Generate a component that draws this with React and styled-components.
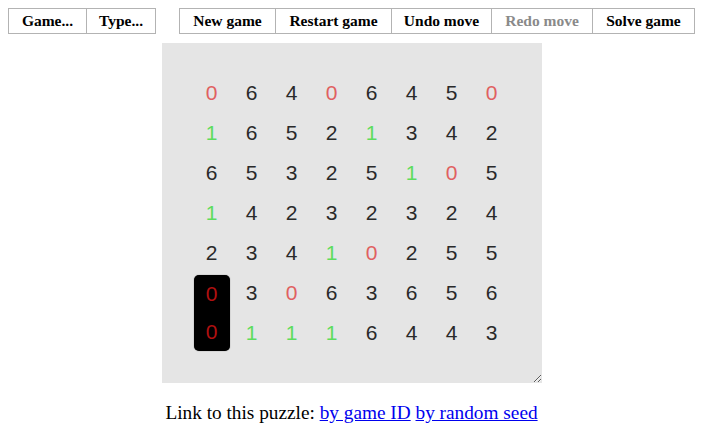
import React from 'react';
import styled, { createGlobalStyle } from 'styled-components';

const GlobalStyle = createGlobalStyle`
    body {
        margin: 8px;
        background: #ffffff;
        font-family: "Liberation Serif", "Times New Roman", serif;
    }
`;

const grid = [
    [0, 6, 4, 0, 6, 4, 5, 0],
    [1, 6, 5, 2, 1, 3, 4, 2],
    [6, 5, 3, 2, 5, 1, 0, 5],
    [1, 4, 2, 3, 2, 3, 2, 4],
    [2, 3, 4, 1, 0, 2, 5, 5],
    [0, 3, 0, 6, 3, 6, 5, 6],
    [0, 1, 1, 1, 6, 4, 4, 3],
];

const tone = (n) => (n === 0 ? 'red' : n === 1 ? 'green' : 'plain');

const Page = styled.div`
    display: flex;
    flex-direction: column;
    align-items: center;
`;

const Toolbar = styled.div`
    align-self: stretch;
    display: flex;
    justify-content: space-between;
`;

const ButtonGroup = styled.div`
    display: flex;
    border: 1px solid #b3b3b3;
    height: 24px;
`;

const ToolButton = styled.button`
    width: ${(p) => p.w}px;
    height: 24px;
    padding: 0;
    border: none;
    border-left: ${(p) => (p.first ? 'none' : '1px solid #b3b3b3')};
    background: #ffffff;
    font-family: "Liberation Serif", "Times New Roman", serif;
    font-weight: bold;
    font-size: 15.5px;
    color: ${(p) => (p.disabled ? '#8a8a8a' : '#000000')};
`;

const Board = styled.div`
    margin-top: 9px;
    width: 380px;
    height: 340px;
    box-sizing: border-box;
    padding: 30px;
    background: #e5e5e5;
    resize: both;
    overflow: hidden;
`;

const Cells = styled.div`
    display: grid;
    grid-template-columns: repeat(8, 40px);
    grid-template-rows: repeat(7, 40px);
`;

const colours = {
    red: '#e06060',
    green: '#5ddc5d',
    plain: '#2a2a2a',
    domino: '#b01010',
};

const Digit = styled.div`
    display: flex;
    align-items: center;
    justify-content: center;
    height: 40px;
    font-family: "Liberation Sans", Arial, sans-serif;
    font-size: 21px;
    color: ${(p) => colours[p.tone]};
`;

const Domino = styled.div`
    grid-column: 1;
    grid-row: 6 / span 2;
    margin: 2px;
    background: #000000;
    border-radius: 5px;
    display: flex;
    flex-direction: column;
    justify-content: space-around;
    box-shadow: 0 0 1px #555;

    ${Digit} {
        height: 36px;
    }
`;

const LinkLine = styled.p`
    margin: 19px 0 0;
    font-size: 19.3px;
    color: #000000;

    a {
        color: #0000ee;
    }
`;

export default function App() {
    return (
        <>
            <GlobalStyle />
            <Page>
                <Toolbar>
                    <ButtonGroup>
                        <ToolButton first w={77}>Game...</ToolButton>
                        <ToolButton w={69}>Type...</ToolButton>
                    </ButtonGroup>
                    <ButtonGroup>
                        <ToolButton first w={95}>New game</ToolButton>
                        <ToolButton w={116}>Restart game</ToolButton>
                        <ToolButton w={100}>Undo move</ToolButton>
                        <ToolButton w={101} disabled>Redo move</ToolButton>
                        <ToolButton w={102}>Solve game</ToolButton>
                    </ButtonGroup>
                </Toolbar>
                <Board>
                    <Cells>
                        {grid.map((row, r) =>
                            row.map((n, c) =>
                                c === 0 && r >= 5 ? null : (
                                    <Digit key={`${r}-${c}`} tone={tone(n)} style={{ gridRow: r + 1, gridColumn: c + 1 }}>
                                        {n}
                                    </Digit>
                                )
                            )
                        )}
                        <Domino>
                            <Digit tone="domino">{grid[5][0]}</Digit>
                            <Digit tone="domino">{grid[6][0]}</Digit>
                        </Domino>
                    </Cells>
                </Board>
                <LinkLine>
                    Link to this puzzle: <a href="#id">by game ID</a> <a href="#seed">by random seed</a>
                </LinkLine>
            </Page>
        </>
    );
}
